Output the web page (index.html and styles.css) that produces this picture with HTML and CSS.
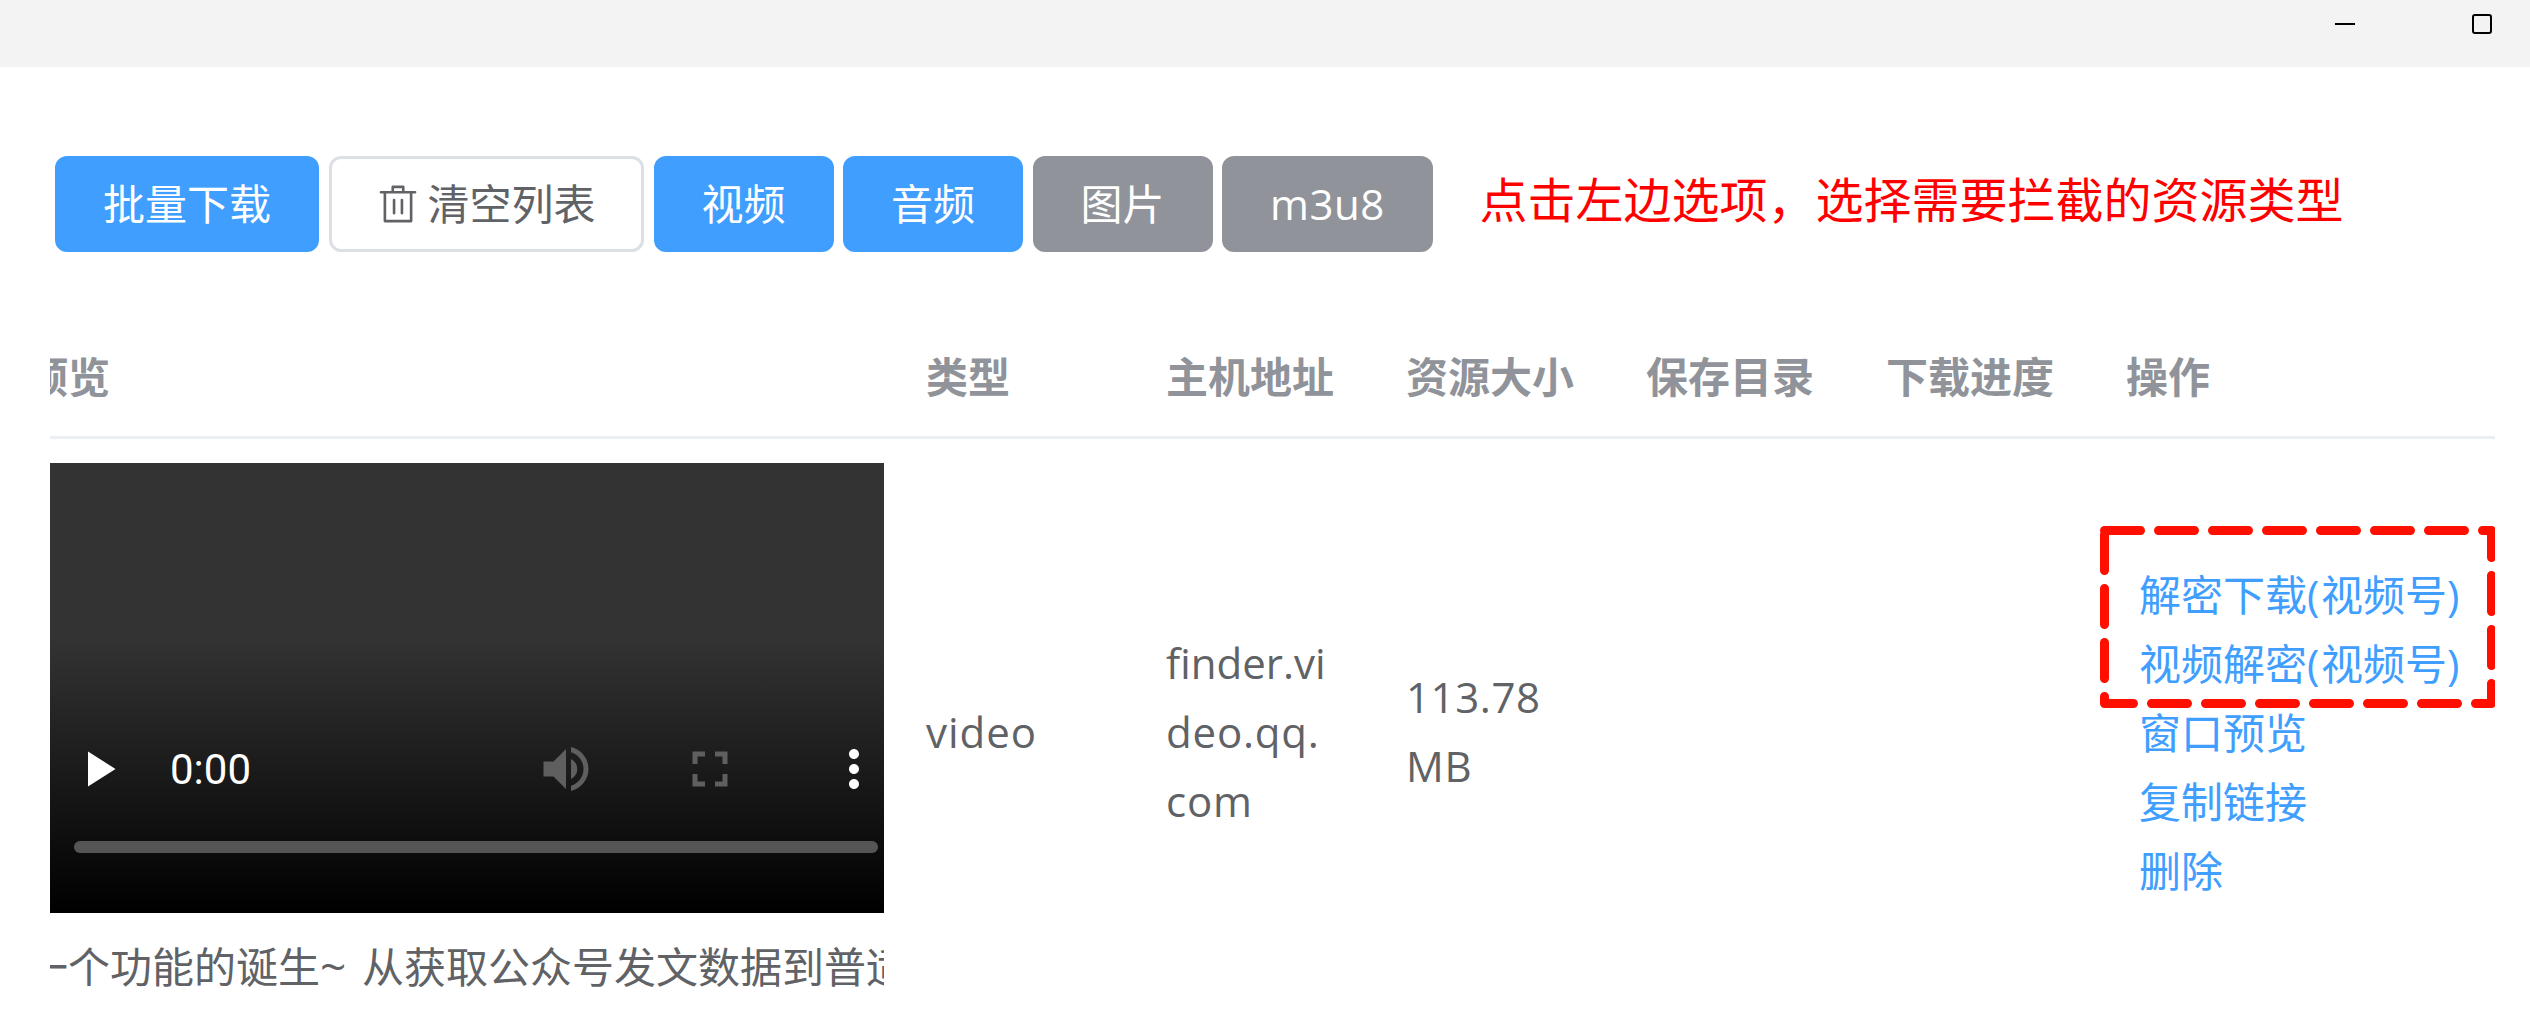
FILE: index.html
```html
<!DOCTYPE html>
<html lang="zh-CN">
<head>
<meta charset="utf-8">
<title>资源下载</title>
<link rel="stylesheet" href="styles.css">
</head>
<body>
<header class="titlebar">
  <svg class="win-icon" viewBox="0 0 20 20"><path d="M0 10h20"/></svg>
  <svg class="win-icon" viewBox="0 0 20 20"><rect x="1" y="1" width="18" height="18" rx="2"/></svg>
</header>
<main class="page">
  <div class="toolbar">
    <button class="btn primary">批量下载</button>
    <button class="btn plain"><svg class="trash" viewBox="0 0 1024 1024"><path d="M160 256H96a32 32 0 0 1 0-64h256V95.936a32 32 0 0 1 32-32h256a32 32 0 0 1 32 32V192h256a32 32 0 1 1 0 64h-64v672a32 32 0 0 1-32 32H192a32 32 0 0 1-32-32zm448-64v-64H416v64zM224 896h576V256H224zm192-128a32 32 0 0 1-32-32V416a32 32 0 0 1 64 0v320a32 32 0 0 1-32 32m192 0a32 32 0 0 1-32-32V416a32 32 0 0 1 64 0v320a32 32 0 0 1-32 32"/></svg>清空列表</button>
    <button class="btn primary">视频</button>
    <button class="btn primary">音频</button>
    <button class="btn info">图片</button>
    <button class="btn info latin-btn">m3u8</button>
    <span class="hint">点击左边选项，选择需要拦截的资源类型</span>
  </div>
  <section class="table">
    <div class="row head">
      <div class="cell">预览</div>
      <div class="cell">类型</div>
      <div class="cell">主机地址</div>
      <div class="cell">资源大小</div>
      <div class="cell">保存目录</div>
      <div class="cell">下载进度</div>
      <div class="cell">操作</div>
    </div>
    <div class="row body">
      <div class="cell preview">
        <div class="video">
          <div class="controls">
            <svg class="ctl" viewBox="0 0 24 24"><path d="M8 5v14l11-7z"/></svg>
            <span class="time">0:00</span>
            <svg class="ctl dim volume" viewBox="0 0 24 24"><path d="M3 9v6h4l5 5V4L7 9H3zm13.500 3A4.500 4.500 0 0 0 14 7.970v8.050c1.480-.73 2.500-2.250 2.500-4.020zM14 3.230v2.060c2.890.86 5 3.540 5 6.710s-2.110 5.850-5 6.710v2.060c4.010-.91 7-4.490 7-8.770s-2.990-7.860-7-8.770z"/></svg>
            <svg class="ctl dim full" viewBox="0 0 24 24"><path d="M7 14H5v5h5v-2H7v-3zm-2-4h2V7h3V5H5v5zm12 7h-3v2h5v-5h-2v3zM14 5v2h3v3h2V5h-5z"/></svg>
            <svg class="ctl more" viewBox="0 0 24 24"><path d="M12 8c1.100 0 2-.9 2-2s-.9-2-2-2-2 .9-2 2 .9 2 2 2zm0 2c-1.100 0-2 .9-2 2s.9 2 2 2 2-.9 2-2-.9-2-2-2zm0 6c-1.100 0-2 .9-2 2s.9 2 2 2 2-.9 2-2-.9-2-2-2z"/></svg>
          </div>
          <div class="track"></div>
        </div>
        <div class="caption">一个功能的诞生<span class="tilde">~</span>从获取公众号发文数据到普适</div>
      </div>
      <div class="cell text video-type">video</div>
      <div class="cell text host">finder.vi<br><span class="wide">deo.qq.</span><br><span class="wide">com</span></div>
      <div class="cell text size">113.78<br>MB</div>
      <div class="cell"></div>
      <div class="cell"></div>
      <div class="cell actions">
        <a>解密下载<span class="paren">(</span>视频号)</a>
        <a>视频解密<span class="paren">(</span>视频号)</a>
        <a>窗口预览</a>
        <a>复制链接</a>
        <a>删除</a>
        <svg class="callout" viewBox="0 0 398 184"><path d="M5.500 5.500h387v173h-387z"/></svg>
      </div>
    </div>
  </section>
</main>
</body>
</html>
```
FILE: styles.css
```css
* { box-sizing: border-box; }
body {
  margin: 0;
  height: 1009px;
  overflow: hidden;
  background: #fff;
  color: #606266;
  font: 42px/69px "Open Sans", "Noto Sans CJK SC", sans-serif;
}
.titlebar {
  display: flex;
  justify-content: flex-end;
  gap: 117px;
  height: 67px;
  padding: 14px 38px 0 0;
  background: #f3f3f3;
}
.win-icon { width: 20px; height: 20px; fill: none; stroke: #000; stroke-width: 2; }
.page { padding: 89px 35px 0 50px; }
.toolbar { display: flex; gap: 9.5px; height: 96px; padding-left: 5px; }
.btn {
  display: flex;
  flex: none;
  align-items: center;
  height: 96px;
  padding: 0 45px;
  border: 3px solid transparent;
  border-radius: 12px;
  color: #fff;
  font: 42px/42px "Open Sans", "Noto Sans CJK SC", sans-serif;
  white-space: nowrap;
}
.primary { background: #409eff; border-color: #409eff; }
.plain { width: 315.500px; background: #fff; border-color: #dcdfe6; color: #606266; }
.info { background: #909399; border-color: #909399; }
.latin-btn { width: 211px; letter-spacing: .5px; }
.trash { width: 42px; height: 42px; margin-right: 9px; fill: currentColor; }
.hint { margin-left: 37px; color: #f00; font-size: 48px; line-height: 88px; white-space: nowrap; }
.table { margin-top: 65px; overflow: hidden; }
.row {
  display: grid;
  grid-template-columns: 900px repeat(5, 240px) 400px;
  margin-left: -54px;
}
.cell { padding: 0 30px; }
.head {
  height: 122px;
  border-bottom: 3px solid #ebeef5;
  color: #909399;
  font-weight: 700;
  line-height: 120px;
}
.body { height: 588px; align-items: center; }
.text { padding-bottom: 4px; }
.video-type { letter-spacing: 1px; }
.wide { letter-spacing: .8px; }
.size { letter-spacing: .6px; }
.preview { align-self: start; width: 888px; padding-top: 24px; padding-right: 0; overflow: hidden; }
.video {
  width: 900px;
  height: 450px;
  padding: 276px 0 0 42px;
  background: linear-gradient(#333 0, #333 39%, #000 100%);
}
.controls { display: flex; align-items: center; height: 60px; }
.ctl { flex: none; width: 60px; height: 60px; fill: #fff; }
.dim { fill: #5f5f5f; }
.time { flex: none; width: 408px; padding-left: 42px; color: #fff; font-family: Roboto, sans-serif; }
.volume { margin-right: 84px; }
.full { margin-right: 84px; }
.track { width: 804px; height: 12px; margin: 42px 0 0 6px; border-radius: 6px; background: #555; }
.caption { margin-top: 19px; white-space: nowrap; }
.tilde { display: inline-block; width: 42px; font-size: 46px; line-height: 42px; }
.actions { position: relative; padding-left: 43px; padding-bottom: 1px; }
.actions a { display: block; color: #409eff; white-space: nowrap; }
.paren { letter-spacing: 1.500px; }
.callout {
  position: absolute;
  left: 3px;
  top: -35px;
  width: 398px;
  height: 184px;
  fill: none;
  stroke: #ff0f00;
  stroke-width: 9;
  stroke-linecap: round;
  stroke-linejoin: round;
  stroke-dasharray: 36 18;
}
```
